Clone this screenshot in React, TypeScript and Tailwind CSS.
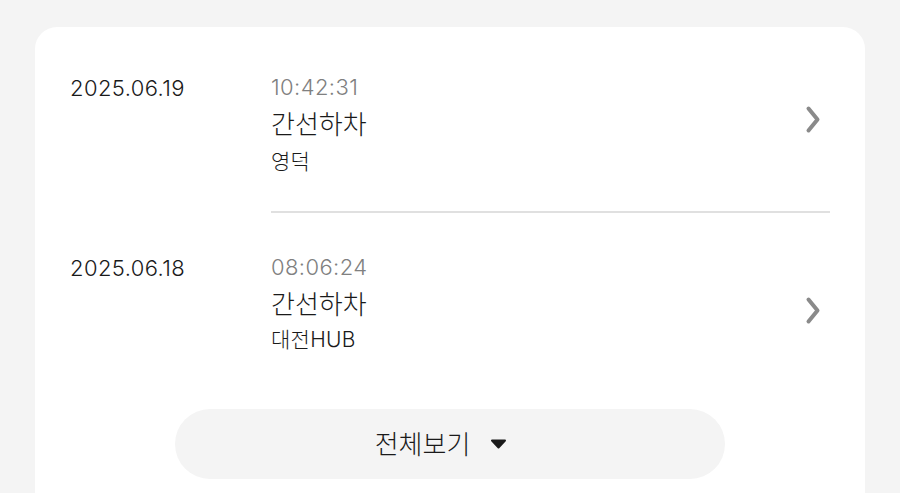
import React from "react";

const font = { fontFamily: 'Inter, "Noto Sans CJK KR", sans-serif' };

function Chevron() {
  return (
    <svg width="18" height="29" viewBox="0 0 18 29" className="shrink-0">
      <path d="M4.5 3.5 L13.5 14.5 L4.5 25.5" fill="none" stroke="#8a8a8a" strokeWidth="4" strokeLinecap="round" strokeLinejoin="round" />
    </svg>
  );
}

function Row({ date, time, title, sub, subGap, chevOffset, divider }: { date: string; time: string; title: string; sub: string; subGap: string; chevOffset: string; divider?: boolean }) {
  return (
    <div className="flex">
      <div className="w-[201px] shrink-0 pt-[1px] text-[22px] leading-[28px] font-light tracking-[0.4px] text-[#1a1a1a]">{date}</div>
      <div className="flex-1">
        <div className="flex items-center">
          <div className="flex-1">
            <div className="text-[22px] leading-[28px] font-light tracking-[0.4px] text-[#808080]">{time}</div>
            <div className="mt-[7px] text-[26px] leading-[34px] font-light text-[#1a1a1a]">{title}</div>
            <div className={`${subGap} text-[21px] leading-[28px] font-light tracking-[0.3px] text-[#1a1a1a]`}>{sub}</div>
          </div>
          <div className={`mr-[8px] ${chevOffset}`}><Chevron /></div>
        </div>
        {divider && <div className="mt-[35px] mb-[40px] h-[2px] bg-[#e0e0e0]" />}
      </div>
    </div>
  );
}

export default function App() {
  return (
    <div className="w-[900px] h-[493px] overflow-hidden bg-[#f4f4f4] pt-[27px] px-[35px]" style={font}>
      <div className="bg-white rounded-[22px] pt-[46px] px-[35px] pb-[40px]">
        <Row date="2025.06.19" time="10:42:31" title="간선하차" sub="영덕" subGap="mt-[6px]" chevOffset="-mt-[10px]" divider />
        <Row date="2025.06.18" time="08:06:24" title="간선하차" sub="대전HUB" subGap="mt-[4px]" chevOffset="mt-[14px]" />
        <div className="flex justify-center mt-[55px]">
          <button className="w-[550px] h-[70px] rounded-full bg-[#f4f4f4] flex items-center justify-center gap-[20px] pr-[18px]">
            <span className="text-[26px] font-light text-[#1a1a1a]">전체보기</span>
            <svg width="17" height="10" viewBox="0 0 17 10">
              <path d="M2 1.5 H15 L8.5 8.5 Z" fill="#1a1a1a" stroke="#1a1a1a" strokeWidth="2" strokeLinejoin="round" />
            </svg>
          </button>
        </div>
      </div>
    </div>
  );
}
